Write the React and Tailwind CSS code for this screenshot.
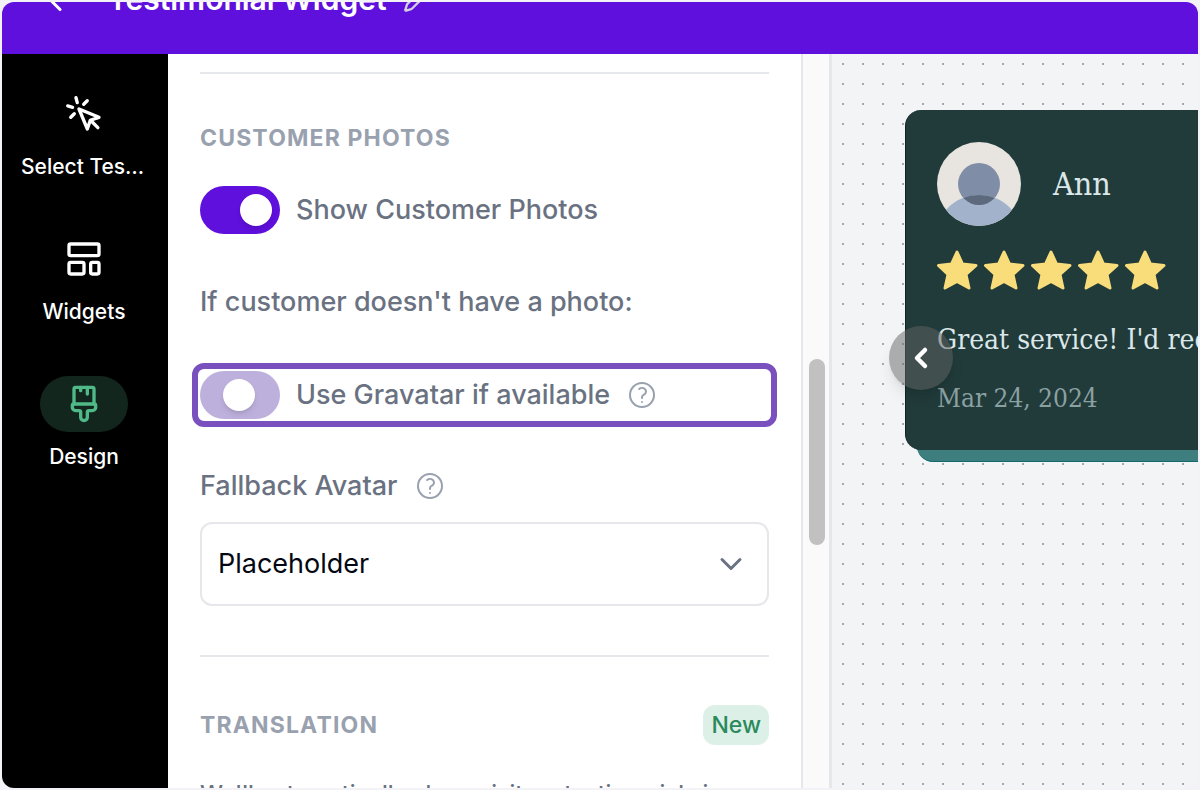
import { useState } from "react";
import {
  ArrowLeft,
  ChevronDown,
  LayoutTemplate,
  PaintbrushVertical,
  Pencil,
} from "lucide-react";

function PointerIcon({ className }) {
  return (
    <svg
      viewBox="0 0 24 24"
      fill="none"
      stroke="currentColor"
      strokeWidth="2"
      strokeLinecap="round"
      strokeLinejoin="round"
      className={className}
      aria-hidden="true"
    >
      <path d="m9 9 5 12 1.774-5.226L21 14 9 9z" />
      <path d="m16.071 15.929 4.243 4.242" />
      <path d="m7.188 2.239.777 2.897M5.136 7.965l-2.898-.777M13.95 4.05l-2.122 2.122m-5.657 5.656-2.12 2.122" />
    </svg>
  );
}

function HelpIcon() {
  return (
    <svg
      viewBox="0 0 24 24"
      fill="none"
      stroke="currentColor"
      strokeWidth="1.5"
      strokeLinecap="round"
      strokeLinejoin="round"
      className="size-8 shrink-0 text-gray-400"
      aria-hidden="true"
    >
      <path d="M9.879 7.519c1.171-1.025 3.071-1.025 4.242 0 1.172 1.025 1.172 2.687 0 3.712-.203.179-.43.326-.67.442-.745.361-1.45.999-1.45 1.827v.75M21 12a9 9 0 1 1-18 0 9 9 0 0 1 18 0Zm-9 5.25h.008v.008H12v-.008Z" />
    </svg>
  );
}

function Star() {
  return (
    <svg
      viewBox="0 0 42 40"
      fill="currentColor"
      stroke="currentColor"
      strokeWidth="3"
      strokeLinejoin="round"
      className="h-10 w-[42px]"
      aria-hidden="true"
    >
      <path d="M20 2 25.5 14 39 15.5 29 24.5 32 38 20 31.5 8 38l3-13.5L1.500 15.5 14.500 14Z" />
    </svg>
  );
}

function Avatar() {
  return (
    <svg viewBox="0 0 84 84" className="size-21 shrink-0 rounded-full" aria-hidden="true">
      <clipPath id="head">
        <circle cx="42" cy="42" r="21" />
      </clipPath>
      <rect width="84" height="84" fill="#e8e4df" />
      <circle cx="42" cy="42" r="21" fill="#7f8ea6" />
      <circle cx="42" cy="97" r="44" fill="#a2b2ca" />
      <circle cx="42" cy="97" r="44" fill="#5d697c" clipPath="url(#head)" />
    </svg>
  );
}

const NAV = [
  { label: "Select Testimonials", icon: PointerIcon },
  { label: "Widgets", icon: LayoutTemplate },
  { label: "Design", icon: PaintbrushVertical, active: true },
];

function Sidebar() {
  return (
    <nav className="flex w-[166px] shrink-0 flex-col gap-11 bg-black pt-8 pr-[21px] pl-[19px]">
      {NAV.map(({ label, icon: Icon, active }) => (
        <a key={label} href="#" className="flex flex-col items-center gap-1 text-white">
          <span
            className={
              active
                ? "flex h-14 w-22 items-center justify-center rounded-full bg-[#12261e] text-[#4fba87]"
                : "flex h-14 w-22 items-center justify-center rounded-full"
            }
          >
            <Icon className="size-10" />
          </span>
          <span className="w-full truncate text-center text-[21px] leading-[41px] font-medium">
            {label}
          </span>
        </a>
      ))}
    </nav>
  );
}

function Toggle({ id, checked, onChange, middle }) {
  return (
    <span className="relative flex h-12 w-20 shrink-0">
      <input
        id={id}
        type="checkbox"
        role="switch"
        checked={checked}
        onChange={(e) => onChange(e.target.checked)}
        className={
          middle
            ? "size-full appearance-none rounded-full bg-[#bdb0dc]"
            : "size-full appearance-none rounded-full bg-[#5f10dd]"
        }
      />
      <span
        className={
          middle
            ? "pointer-events-none absolute top-2 left-[23px] size-8 rounded-full bg-white shadow-md"
            : "pointer-events-none absolute top-2 left-10 size-8 rounded-full bg-white shadow-md"
        }
      />
    </span>
  );
}

function SectionTitle({ children }) {
  return (
    <h2 className="text-[23px] leading-8 font-bold tracking-wider text-gray-400 uppercase">
      {children}
    </h2>
  );
}

function DesignPanel() {
  const [showPhotos, setShowPhotos] = useState(true);
  const [gravatar, setGravatar] = useState(false);
  const [fallback, setFallback] = useState("Placeholder");

  return (
    <section className="w-[633px] shrink-0 overflow-hidden bg-white px-8 pt-[18px] text-[27px] leading-10 font-medium text-gray-500">
      <hr className="border-t-2 border-gray-200" />

      <div className="mt-12">
        <SectionTitle>Customer Photos</SectionTitle>
      </div>
      <div className="mt-8 flex items-center gap-4">
        <Toggle id="show-photos" checked={showPhotos} onChange={setShowPhotos} />
        <label htmlFor="show-photos">Show Customer Photos</label>
      </div>

      <p className="mt-12">If customer doesn't have a photo:</p>

      <div className="-mx-2 mt-[41px] flex h-16 items-center gap-4 rounded-xl border-6 border-[#7950bd] px-[2px]">
        <Toggle id="gravatar" checked={gravatar} onChange={setGravatar} middle />
        <label htmlFor="gravatar">Use Gravatar if available</label>
        <HelpIcon />
      </div>

      <div className="mt-[39px] flex items-center gap-4">
        <label htmlFor="fallback">Fallback Avatar</label>
        <HelpIcon />
      </div>
      <div className="relative mt-4">
        <select
          id="fallback"
          value={fallback}
          onChange={(e) => setFallback(e.target.value)}
          className="h-[84px] w-full appearance-none rounded-xl border-2 border-gray-200 bg-white px-4 font-normal text-gray-950"
        >
          <option>Placeholder</option>
        </select>
        <ChevronDown className="pointer-events-none absolute top-6 right-5 size-9 text-gray-500" />
      </div>

      <hr className="mt-[49px] border-t-2 border-gray-200" />

      <div className="mt-12 flex items-center justify-between">
        <SectionTitle>Translation</SectionTitle>
        <span className="rounded-xl bg-[#ddf0e7] px-2 text-[23px] text-[#2b8a5c]">New</span>
      </div>
      <p className="mt-[29px] truncate text-[23px]">
        We'll automatically show visitors testimonials in
      </p>
    </section>
  );
}

function ScrollBar() {
  return (
    <div className="w-[31px] shrink-0 border-r-3 border-l-2 border-gray-200 bg-[#fafafa] pt-[305px] pl-[6px]">
      <div className="h-[186px] w-4 rounded-full bg-[#c1c1c1]" />
    </div>
  );
}

function Preview() {
  return (
    <main className="min-w-0 flex-1 overflow-hidden bg-gray-100 bg-[radial-gradient(circle,#a6a9b5_1px,transparent_1px)] bg-[length:20px_20px] bg-[position:1px_0px] pt-14 pl-[73px]">
      <div className="relative min-w-[600px]">
        <div className="absolute inset-x-3 top-3 -bottom-3 rounded-2xl border-b border-[#0f6b6b] bg-[#3e7e7f]" />
        <article className="relative rounded-2xl border-l border-[#0f2423] bg-[#213a3a] px-[31px] py-8 font-['DejaVu_Serif_Condensed','DejaVu_Serif',serif] whitespace-nowrap text-[#dbe7e8]">
          <div className="flex items-center gap-8">
            <Avatar />
            <h3 className="text-[32px]">Ann</h3>
          </div>
          <div className="mt-6 flex gap-[5px] text-[#f9dd7b]" role="img" aria-label="5 out of 5 stars">
            {[1, 2, 3, 4, 5].map((n) => (
              <Star key={n} />
            ))}
          </div>
          <p className="mt-7 text-[28px] leading-11">Great service! I'd recommend</p>
          <p className="mt-4 text-[26px] leading-10 text-[#8ba0a1]">Mar 24, 2024</p>
        </article>
        <button
          type="button"
          aria-label="Previous testimonial"
          className="absolute top-[216px] -left-4 flex size-16 items-center justify-center rounded-full bg-[#636363]/50 text-white shadow-lg"
        >
          <svg
            viewBox="0 0 16 24"
            fill="none"
            stroke="currentColor"
            strokeWidth="4.5"
            strokeLinecap="round"
            strokeLinejoin="round"
            className="h-6 w-4"
            aria-hidden="true"
          >
            <path d="M12 4 4 12l8 8" />
          </svg>
        </button>
      </div>
    </main>
  );
}

export default function App() {
  return (
    <div className="h-screen bg-[#f3f2f7] p-[2px] font-['Inter',sans-serif]">
      <div className="flex h-full flex-col overflow-hidden rounded-xl">
        <header className="flex h-[52px] shrink-0 items-end gap-4 overflow-hidden bg-[#5f10dd] pb-[37px] pl-10 text-white">
          <a href="#" aria-label="Back">
            <ArrowLeft className="size-9" />
          </a>
          <h1 className="pl-[14px] text-[30px] leading-9 font-semibold">Testimonial Widget</h1>
          <button type="button" aria-label="Rename" className="pb-1">
            <Pencil className="size-7 text-[#d3cfe0]" />
          </button>
        </header>
        <div className="flex min-h-0 flex-1">
          <Sidebar />
          <DesignPanel />
          <ScrollBar />
          <Preview />
        </div>
      </div>
    </div>
  );
}
